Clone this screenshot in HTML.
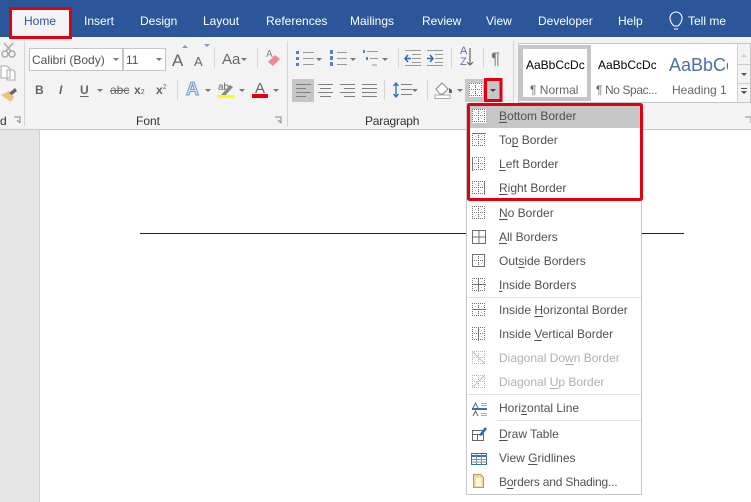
<!DOCTYPE html>
<html><head><meta charset="utf-8">
<style>
html,body{margin:0;padding:0}
body{width:751px;height:502px;position:relative;overflow:hidden;background:#fff;font-family:"Liberation Sans",sans-serif;font-size:12px;color:#444}
.a{position:absolute;box-sizing:border-box}
.t{position:absolute;white-space:nowrap;line-height:16px}
.tab{color:#fff;font-size:12px;top:13px}
.m{position:absolute;left:499px;white-space:nowrap;line-height:16px;color:#505050;font-size:12px}
.d{color:#b0b0b0}
u{text-decoration-thickness:1px;text-underline-offset:2px}
svg{position:absolute;left:0;top:0}
</style></head><body>
<div class="a" style="left:0;top:0;width:751px;height:37px;background:#2b579a"></div>
<div class="a" style="left:0;top:37px;width:751px;height:93px;background:#f3f3f3;border-bottom:1px solid #c9c9c9"></div>
<div class="a" style="left:0;top:130px;width:40px;height:372px;background:#e6e6e6;border-right:1px solid #d0d0d0"></div>
<div class="a" style="left:140px;top:233px;width:544px;height:1px;background:#222"></div>

<div class="a" style="left:9px;top:7px;width:63px;height:32px;background:#f3f3f3;border:3px solid #e00012"></div>
<div class="t tab" style="left:24px;color:#2b579a">Home</div>
<div class="t tab" style="left:84px">Insert</div>
<div class="t tab" style="left:140px">Design</div>
<div class="t tab" style="left:203px">Layout</div>
<div class="t tab" style="left:266px">References</div>
<div class="t tab" style="left:350px">Mailings</div>
<div class="t tab" style="left:422px">Review</div>
<div class="t tab" style="left:486px">View</div>
<div class="t tab" style="left:538px">Developer</div>
<div class="t tab" style="left:618px">Help</div>
<div class="t tab" style="left:688px">Tell me</div>

<div class="a" style="left:29px;top:48px;width:94px;height:23px;background:#fff;border:1px solid #c6c6c6"></div>
<div class="a" style="left:123px;top:48px;width:43px;height:23px;background:#fff;border:1px solid #c6c6c6"></div>
<div class="t" style="left:32px;top:52px;color:#505050">Calibri (Body)</div>
<div class="t" style="left:126px;top:52px;color:#505050">11</div>
<div class="t" style="left:136px;top:113px;color:#333">Font</div>
<div class="t" style="left:365px;top:113px;color:#333;letter-spacing:-.2px">Paragraph</div>
<div class="t" style="left:0;top:113px;color:#333">d</div>

<div class="t" style="left:172px;top:50px;font-size:17px;line-height:22px;color:#666">A</div>
<div class="t" style="left:194px;top:54px;font-size:13px;color:#666">A</div>
<div class="t" style="left:222px;top:50px;font-size:15px;line-height:20px;color:#666">Aa</div>
<div class="t" style="left:35px;top:82px;font-weight:bold;color:#666">B</div>
<div class="t" style="left:59px;top:82px;font-style:italic;font-weight:bold;color:#666">I</div>
<div class="t" style="left:80px;top:82px;font-weight:bold;color:#666"><u>U</u></div>
<div class="t" style="left:110px;top:82px;color:#666;text-decoration:line-through">abc</div>
<div class="t" style="left:134px;top:82px;font-weight:bold;color:#666">x<span style="font-size:7px;font-weight:normal">2</span></div>
<div class="t" style="left:156px;top:82px;font-weight:bold;color:#666">x<sup style="font-size:7px;font-weight:normal;line-height:0">2</sup></div>
<div class="t" style="left:186px;top:78px;font-size:18px;line-height:22px;font-weight:bold;color:#d5e4f6;-webkit-text-stroke:1px #6f9bcf">A</div>
<div class="t" style="left:218px;top:80px;font-size:10px;color:#666">ab</div>
<div class="t" style="left:255px;top:81px;font-size:15px;color:#666">A</div>
<div class="t" style="left:266px;top:49px;font-size:10px;line-height:12px;color:#888">A</div>
<div class="t" style="left:491px;top:49px;font-size:17px;line-height:20px;color:#777">¶</div>
<div class="t" style="left:460px;top:46px;font-size:11px;line-height:10px;color:#6a6fa8">A</div>
<div class="t" style="left:460px;top:57px;font-size:11px;line-height:10px;color:#6a6fa8">Z</div>

<div class="a" style="left:518px;top:43px;width:233px;height:60px;background:#fff;border:1px solid #c6c6c6"></div>
<div class="a" style="left:519px;top:45px;width:72px;height:56px;border:4px solid #c6c6c6"></div>
<div class="a" style="left:737px;top:44px;width:13px;height:58px;background:#f3f3f3;border-left:1px solid #d0d0d0"></div>
<div class="a" style="left:526px;top:56px;width:59px;height:18px;overflow:hidden;color:#000;line-height:18px;white-space:nowrap;font-size:12px">AaBbCcDc</div>
<div class="a" style="left:598px;top:56px;width:58px;height:18px;overflow:hidden;color:#000;line-height:18px;white-space:nowrap;font-size:12px">AaBbCcDc</div>
<div class="a" style="left:669px;top:52px;width:59px;height:26px;overflow:hidden;color:#4a6fa5;line-height:26px;white-space:nowrap;font-size:18px">AaBbCc</div>
<div class="t" style="left:530px;top:82px;color:#666">¶ Normal</div>
<div class="t" style="left:596px;top:82px;color:#666;letter-spacing:-.4px">¶ No Spac...</div>
<div class="t" style="left:672px;top:82px;color:#666">Heading 1</div>

<svg width="751" height="502" viewBox="0 0 751 502" style="z-index:1">
<defs>
<g id="grid"><path d="M0 0.500h14M0 6.500h14M0 12.500h14M0.500 0v14M6.500 0v14M12.500 0v14" stroke="#707070" stroke-width="1" stroke-dasharray="1 1" fill="none"/><path d="M3 3.500h8M3 9.500h8" stroke="#c0c0c0" stroke-dasharray="1 2" fill="none"/></g>
<path id="ar" d="M0 0h6l-3 3z" fill="#777"/>
</defs>
<!-- dividers -->
<path d="M24.500 41v85M287.500 41v85M513.500 41v85" stroke="#d4d4d4"/>
<path d="M214.500 48v20M257.500 48v20M177.500 80v20M398.500 48v20M451.500 48v20M483.500 48v20M384.500 80v20M427.500 80v20" stroke="#d4d4d4"/>
<!-- clipboard -->
<circle cx="5" cy="54" r="3" fill="none" stroke="#aaa" stroke-width="1.500"/><circle cx="12" cy="54" r="3" fill="none" stroke="#aaa" stroke-width="1.500"/>
<path d="M6 51L13 43M11 51L4 43" stroke="#aaa" stroke-width="1.500"/>
<path d="M1 66h6l3 3v9H1zM7 70h6l2 2v8H7z" fill="#fff" stroke="#aaa"/>
<path d="M1 95l8-4 5 6-3 5z" fill="#eec27a"/><path d="M9 93l6-5 2 3-5 4z" fill="#666"/>
<path d="M14 117h6v6M17 120l3 3" stroke="#888" fill="none"/>
<path d="M275 117h6v6M278 120l3 3" stroke="#888" fill="none"/>
<path d="M745 117h6v6" stroke="#888" fill="none"/>
<!-- dropdown arrows -->
<use href="#ar" x="113" y="58"/><use href="#ar" x="156" y="58"/><use href="#ar" x="241" y="58"/>
<use href="#ar" x="97" y="89"/><use href="#ar" x="205" y="89"/><use href="#ar" x="239" y="89"/><use href="#ar" x="273" y="89"/>
<use href="#ar" x="316" y="58"/><use href="#ar" x="350" y="58"/><use href="#ar" x="382" y="58"/>
<use href="#ar" x="412" y="89"/><use href="#ar" x="457" y="89"/>
<path d="M182 48l3-3 3 3zM204 44h6l-3 3z" fill="#7a9cc6"/>
<!-- clear formatting -->
<path d="M268 62l7-7 5 4-7 7z" fill="#e88a9a"/>
<!-- highlight, color bars -->
<path d="M221 95l9-10 3 2-9 10z" fill="#888"/>
<rect x="217" y="95" width="18" height="3" rx="1" fill="#ffff00"/>
<rect x="252" y="94" width="16" height="4" fill="#e00012"/>
<!-- lists -->
<g stroke="#999"><path d="M303 52.500h11M303 58.500h11M303 64.500h11M337 52.500h10M337 58.500h10M337 64.500h10M367 51.500h11M370 58.500h8M372 65h5"/></g>
<g fill="#5a82b4"><rect x="296" y="51" width="3" height="3"/><rect x="296" y="57" width="3" height="3"/><rect x="296" y="63" width="3" height="3"/>
<rect x="330" y="50" width="3" height="4"/><rect x="330" y="56" width="3" height="4"/><rect x="330" y="62" width="3" height="4"/>
<rect x="363" y="50" width="2" height="3"/><rect x="366" y="57" width="2" height="3"/></g>
<!-- indent -->
<path d="M405 50.500h16M412 54.500h9M412 58.500h9M412 62.500h9M405 65.500h16M427 50.500h16M435 54.500h8M435 58.500h8M435 62.500h8M427 65.500h16" stroke="#999"/>
<path d="M411 58.500h-6M408 55l-3 3.500 3 3.500M427 58.500h6M430 55l3 3.500-3 3.500" stroke="#2b6cb0" stroke-width="1.500" fill="none"/>
<path d="M470 48v17M467 62l3 3 3-3" stroke="#666" stroke-width="1.200" fill="none"/>
<!-- align -->
<rect x="292" y="79" width="22" height="23" fill="#c6c6c6"/>
<path d="M296 84.500h15M296 88.500h10M296 92.500h15M296 96.500h10M318 84.500h15M320 88.500h11M318 92.500h15M320 96.500h11M340 84.500h15M344 88.500h11M340 92.500h15M344 96.500h11M362 84.500h15M362 88.500h15M362 92.500h15M362 96.500h15" stroke="#808080"/>
<!-- line spacing -->
<path d="M401 84.500h11M401 89.500h11M401 94.500h11" stroke="#808080"/>
<path d="M396 83v14M393.500 86l2.500-3 2.500 3M393.500 94l2.500 3 2.500-3" stroke="#2b6cb0" stroke-width="1.300" fill="none"/>
<!-- shading -->
<path d="M436 89l6-6 6 6-5 5h-3z" fill="#fff" stroke="#888"/><path d="M449 88l3 2v3h-3z" fill="#666"/>
<rect x="435" y="95" width="15" height="3.500" fill="#fff" stroke="#aaa"/>
<!-- border button -->
<rect x="465" y="79" width="37" height="23" fill="#c6c6c6"/>
<rect x="469" y="83" width="14" height="14" fill="#fff"/>
<use href="#grid" x="469" y="83"/>
<rect x="485.500" y="79.500" width="15.500" height="21" fill="#c6c6c6" stroke="#e00012" stroke-width="3"/>
<path d="M490 89h6l-3 3z" fill="#444"/>
<!-- tell me bulb -->
<path d="M674 26c-2-2-4-4-4-8a6 6 0 0 1 12 0c0 4-2 6-4 8zM674 29h4" stroke="#fff" fill="none" stroke-width="1.100"/>
<!-- gallery scroll -->
<path d="M741 57l3-3 3 3z" fill="#ccc"/><path d="M741 73h6l-3 3z" fill="#555"/><path d="M741 88h6v1h-6zM741 91h6l-3 3z" fill="#555"/>
<path d="M737 64.500h13M737 83.500h13" stroke="#d0d0d0"/>
</svg>

<!-- menu -->
<div class="a" style="left:466px;top:103px;width:176px;height:392px;background:#fff;border:1px solid #c6c6c6;z-index:2"></div>
<div class="a" style="left:468px;top:106px;width:172px;height:22px;background:#c6c6c6;z-index:2"></div>
<div class="a" style="left:467px;top:297px;width:174px;height:1px;background:#e1e1e1;z-index:2"></div>
<div class="a" style="left:467px;top:394px;width:174px;height:1px;background:#e1e1e1;z-index:2"></div>
<div class="a" style="left:497px;top:420px;width:144px;height:1px;background:#e1e1e1;z-index:2"></div>
<div style="position:absolute;left:0;top:0;z-index:3">
<div class="m" style="top:108px"><u>B</u>ottom Border</div>
<div class="m" style="top:132px">To<u>p</u> Border</div>
<div class="m" style="top:156px"><u>L</u>eft Border</div>
<div class="m" style="top:180px"><u>R</u>ight Border</div>
<div class="m" style="top:205px"><u>N</u>o Border</div>
<div class="m" style="top:229px"><u>A</u>ll Borders</div>
<div class="m" style="top:253px">Out<u>s</u>ide Borders</div>
<div class="m" style="top:277px"><u>I</u>nside Borders</div>
<div class="m" style="top:302px">Inside <u>H</u>orizontal Border</div>
<div class="m" style="top:326px">Inside <u>V</u>ertical Border</div>
<div class="m d" style="top:350px">Diagonal Do<u>w</u>n Border</div>
<div class="m d" style="top:374px">Diagonal <u>U</u>p Border</div>
<div class="m" style="top:400px">Hori<u>z</u>ontal Line</div>
<div class="m" style="top:426px"><u>D</u>raw Table</div>
<div class="m" style="top:450px">View <u>G</u>ridlines</div>
<div class="m" style="top:474px;letter-spacing:-.2px">B<u>o</u>rders and Shading...</div>
</div>
<svg width="751" height="502" viewBox="0 0 751 502" style="z-index:4">
<rect x="472" y="109" width="14" height="14" fill="#fff"/>
<use href="#grid" x="472" y="109"/><path d="M472 122.500h14" stroke="#fff"/>
<use href="#grid" x="472" y="133"/><path d="M472 133.500h14" stroke="#777"/>
<use href="#grid" x="472" y="157"/><path d="M472.500 157v14" stroke="#777"/>
<use href="#grid" x="472" y="181"/><path d="M484.500 181v14" stroke="#777"/>
<use href="#grid" x="472" y="206"/>
<path d="M472.500 230.500h13v13h-13zM472.500 237h13M479 230.500v13" stroke="#707070" fill="none"/>
<use href="#grid" x="472" y="254"/><path d="M472.500 254.500h12v12h-12z" stroke="#707070" fill="none"/>
<use href="#grid" x="472" y="278"/><path d="M472 284.500h14M478.500 278v14" stroke="#707070"/>
<use href="#grid" x="472" y="303"/><path d="M472 309.500h14" stroke="#707070"/>
<use href="#grid" x="472" y="327"/><path d="M478.500 327v14" stroke="#707070"/>
<g opacity=".5"><use href="#grid" x="472" y="351"/><path d="M472 351l13 13" stroke="#777"/>
<use href="#grid" x="472" y="375"/><path d="M472 388l13-13" stroke="#777"/></g>
<path d="M473 407l2.500-5 2.500 5M473 415l2.500-5 2.500 5" stroke="#666" fill="none" transform="translate(0,1)"/>
<path d="M481 403.500h6M481 405.500h6M481 413.500h6M481 415.500h6" stroke="#aaa"/>
<path d="M472 409h15" stroke="#3f6fa8" stroke-width="2"/>
<path d="M472.500 430.500h11v10h-11zM472.500 434.500h11M477.500 434.500v6" stroke="#666" fill="none"/>
<path d="M479 435l6-8 2 2-6 7z" fill="#2b6cb0"/>
<rect x="471.500" y="453.500" width="15" height="11" fill="#fff" stroke="#3f6fa8"/>
<path d="M472 456h14" stroke="#3f6fa8" stroke-width="2"/>
<path d="M472 459.500h14M472 462h14M476.500 454v10M481.500 454v10" stroke="#6f93bd"/>
<path d="M473.500 474.500h7l3 3v10h-10z" fill="#f3dca0" stroke="#b99a55"/>
<rect x="476" y="478" width="5" height="8" fill="#fff6dc"/>
<rect x="468.500" y="104.500" width="173" height="95" fill="none" stroke="#e00012" stroke-width="3" rx="1"/>
</svg>
</body></html>
